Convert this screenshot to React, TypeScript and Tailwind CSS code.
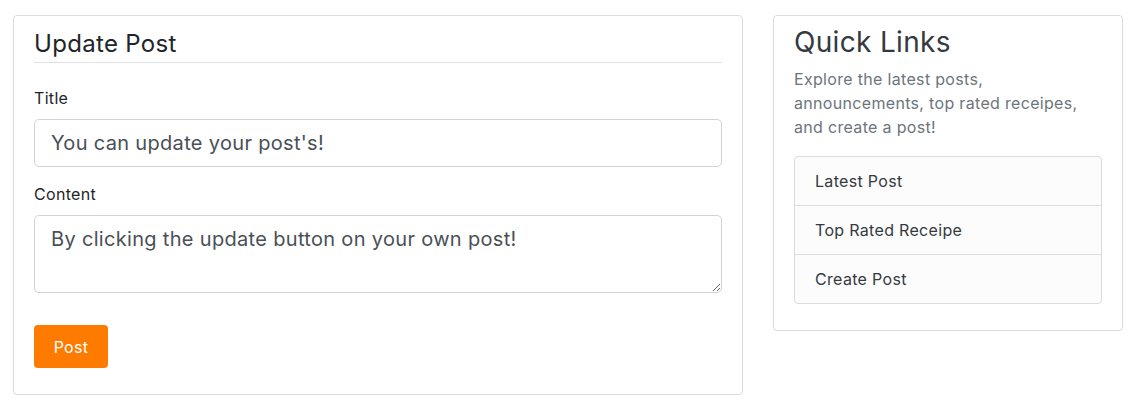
import React from "react";

const links = ["Latest Post", "Top Rated Receipe", "Create Post"];

export default function App() {
  return (
    <div className="min-h-screen bg-white font-['Inter',sans-serif] tracking-[0.02em] text-[#212529]">
      <div className="flex items-start gap-[30px] pl-[13px] pt-[15px]">
        {/* update form */}
        <div className="w-[730px] rounded-[4px] border border-[#dcdcdc] px-5 pt-[14px] pb-[26px]">
          <h4 className="border-b border-[#dee2e6] pb-[4px] text-[24px] leading-[28px] font-normal">
            Update Post
          </h4>
          <form className="mt-[23px]" onSubmit={(e) => e.preventDefault()}>
            <label className="mb-[9px] block text-[16px] leading-[24px]">
              Title
            </label>
            <input
              type="text"
              readOnly
              value="You can update your post's!"
              className="block h-[48px] w-full rounded-[5px] border border-[#ced4da] px-4 text-[20px] leading-[30px] text-[#495057] outline-none"
            />
            <label className="mt-[15px] mb-[9px] block text-[16px] leading-[24px]">
              Content
            </label>
            <textarea
              readOnly
              value="By clicking the update button on your own post!"
              className="block h-[78px] w-full rounded-[5px] border border-[#ced4da] px-4 py-2 text-[20px] leading-[30px] text-[#495057] outline-none"
            />
            <button
              type="submit"
              className="mt-[32px] flex h-[43px] w-[74px] items-center justify-center rounded-[4px] bg-[#ff7b00] text-[16px] text-white"
            >
              Post
            </button>
          </form>
        </div>

        {/* quick links */}
        <div className="w-[350px] rounded-[4px] border border-[#dcdcdc] px-5 pt-[9px] pb-[26px]">
          <h3 className="text-[28px] leading-[34px] font-normal text-[#343a40]">
            Quick Links
          </h3>
          <p className="mt-[8px] text-[16px] leading-[24px] text-[#6c757d]">
            Explore the latest posts,
            <br />
            announcements, top rated receipes,
            <br />
            and create a post!
          </p>
          <ul className="mt-[17px] overflow-hidden rounded-[4px] border border-[#dcdcdc] bg-[#fcfcfc]">
            {links.map((l, i) => (
              <li
                key={l}
                className={`px-5 py-3 text-[16px] leading-[24px] text-[#343a40] ${
                  i > 0 ? "border-t border-[#dcdcdc]" : ""
                }`}
              >
                {l}
              </li>
            ))}
          </ul>
        </div>
      </div>
    </div>
  );
}
